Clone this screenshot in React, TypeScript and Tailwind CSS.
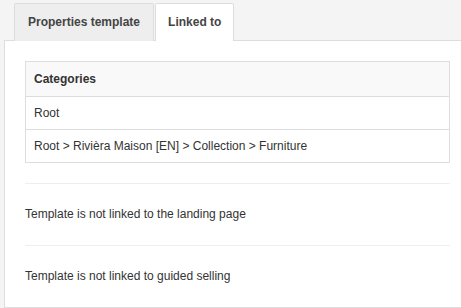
import React from "react";

export default function App() {
  const font = { fontFamily: '"Liberation Sans", Arial, sans-serif' };
  return (
    <div
      className="w-[461px] h-[308px] overflow-hidden bg-[#f4f4f4] pt-[3px] text-[12px] leading-[16px] text-[#333]"
      style={font}
    >
      <div className="flex pl-[14px] gap-px relative z-10 -mb-px">
        <div className="h-[38px] px-[13px] flex items-center pb-[1px] bg-[#eeeeee] border border-[#dddddd] border-b-0 rounded-t-[2px] font-bold text-[#444]">
          Properties template
        </div>
        <div className="h-[38px] px-[12px] flex items-center pb-[1px] bg-white border border-[#dddddd] border-b-0 rounded-t-[2px] font-bold text-[#444]">
          Linked to
        </div>
      </div>
      <div className="ml-[4px] w-[480px] h-[268px] bg-white border-l border-t border-b border-[#dddddd] pt-[20px] pl-[20px]">
        <div className="w-[425px] border border-[#dddddd]">
          <div className="px-[8px] py-[9px] bg-[#f9f9f9] border-b border-[#dddddd] font-bold">
            Categories
          </div>
          <div className="px-[8px] py-[8px] border-b border-[#dddddd]">Root</div>
          <div className="px-[8px] py-[8px]">
            Root &gt; Rivièra Maison [EN] &gt; Collection &gt; Furniture
          </div>
        </div>
        <div className="w-[425px] mt-[20px] border-t border-[#eeeeee]" />
        <div className="py-[22px] leading-[17px]">Template is not linked to the landing page</div>
        <div className="w-[425px] border-t border-[#eeeeee]" />
        <div className="py-[22px] leading-[17px]">Template is not linked to guided selling</div>
      </div>
    </div>
  );
}
